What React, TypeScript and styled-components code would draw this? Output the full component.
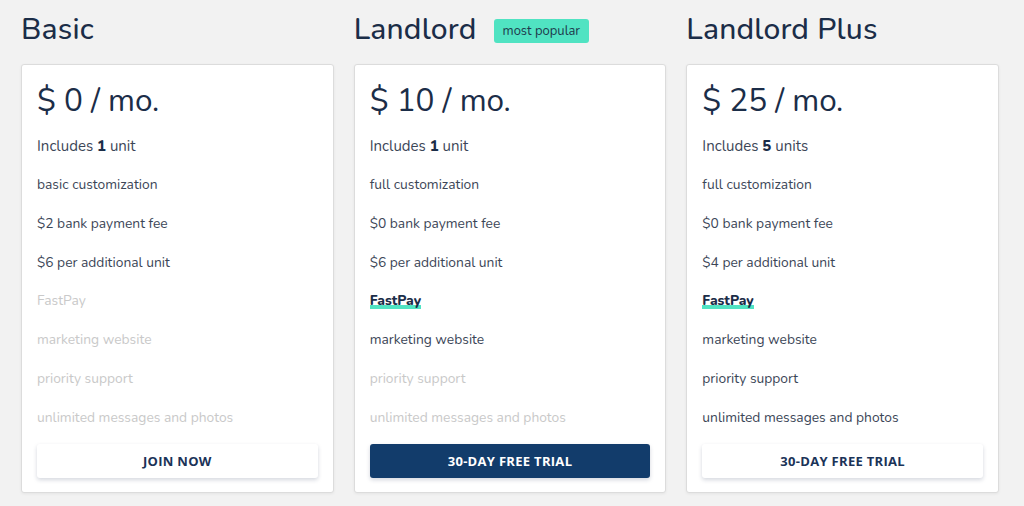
import React from "react";
import styled, { createGlobalStyle } from "styled-components";

const GlobalStyle = createGlobalStyle`
    html, body {
        margin: 0;
        padding: 0;
        background-color: #f2f2f2;
        font-family: "Nunito", "Lato", "Noto Sans", sans-serif;
    }
`;

const Page = styled.main`
    display: grid;
    grid-template-columns: repeat(3, 1fr);
    column-gap: 20px;
    padding: 9px 25px 14px 21px;
    min-height: 506px;
    box-sizing: border-box;
`;

const Column = styled.section`
    display: flex;
    flex-direction: column;
`;

const Header = styled.div`
    display: flex;
    align-items: center;
    gap: 17px;
    height: 41px;
    margin-bottom: 14px;
`;

const Title = styled.h2`
    margin: 0;
    color: #1b2d48;
    font-size: 30px;
    font-weight: 500;
    letter-spacing: 0.2px;
`;

const Badge = styled.span`
    background-color: #50e3c2;
    color: #1f3a4d;
    font-size: 13px;
    padding: 3px 9px 3px;
    border-radius: 3px;
    margin-top: 2px;
`;

const Card = styled.div`
    background-color: #ffffff;
    border: 1px solid #dcdcdc;
    border-radius: 3px;
    box-shadow: 0 1px 3px rgba(0, 0, 0, 0.06);
    padding: 16px 15px 14px 15px;
    display: flex;
    flex-direction: column;
`;

const Price = styled.div`
    color: #1b2d48;
    font-size: 31.5px;
    line-height: 40px;
    margin-bottom: 6px;
`;

const Includes = styled.div`
    color: #3c4657;
    font-size: 15px;
    line-height: 39px;

    b {
        color: #1b2d48;
        font-weight: 800;
    }
`;

const Feature = styled.div<{ $off?: boolean }>`
    color: ${(p) => (p.$off ? "#c9c9c9" : "#3c4657")};
    font-size: 13.8px;
    line-height: 38.8px;
`;

const Highlight = styled.span`
    color: #1b2d48;
    font-weight: 800;
    box-shadow: inset 0 -4px 0 #50e3c2;
    line-height: 16px;
    display: inline-block;
`;

const Button = styled.button<{ $primary?: boolean }>`
    margin-top: 6px;
    height: 34px;
    border: none;
    border-radius: 3px;
    background-color: ${(p) => (p.$primary ? "#123c6b" : "#ffffff")};
    color: ${(p) => (p.$primary ? "#ffffff" : "#1b3358")};
    box-shadow: 0 2px 4px rgba(20, 40, 80, 0.18);
    font-family: "Open Sans", "Noto Sans", sans-serif;
    font-weight: 700;
    font-size: 13px;
    letter-spacing: 0.3px;
    cursor: pointer;
`;

type Plan = {
    name: string;
    badge?: string;
    price: string;
    units: string;
    unitLabel: string;
    features: { text: string; off?: boolean; fastpay?: boolean }[];
    cta: string;
    primary?: boolean;
};

const plans: Plan[] = [
    {
        name: "Basic",
        price: "$ 0 / mo.",
        units: "1",
        unitLabel: "unit",
        features: [
            { text: "basic customization" },
            { text: "$2 bank payment fee" },
            { text: "$6 per additional unit" },
            { text: "FastPay", off: true },
            { text: "marketing website", off: true },
            { text: "priority support", off: true },
            { text: "unlimited messages and photos", off: true },
        ],
        cta: "JOIN NOW",
    },
    {
        name: "Landlord",
        badge: "most popular",
        price: "$ 10 / mo.",
        units: "1",
        unitLabel: "unit",
        features: [
            { text: "full customization" },
            { text: "$0 bank payment fee" },
            { text: "$6 per additional unit" },
            { text: "FastPay", fastpay: true },
            { text: "marketing website" },
            { text: "priority support", off: true },
            { text: "unlimited messages and photos", off: true },
        ],
        cta: "30-DAY FREE TRIAL",
        primary: true,
    },
    {
        name: "Landlord Plus",
        price: "$ 25 / mo.",
        units: "5",
        unitLabel: "units",
        features: [
            { text: "full customization" },
            { text: "$0 bank payment fee" },
            { text: "$4 per additional unit" },
            { text: "FastPay", fastpay: true },
            { text: "marketing website" },
            { text: "priority support" },
            { text: "unlimited messages and photos" },
        ],
        cta: "30-DAY FREE TRIAL",
    },
];

export default function App() {
    return (
        <>
            <GlobalStyle />
            <Page>
                {plans.map((plan) => (
                    <Column key={plan.name}>
                        <Header>
                            <Title>{plan.name}</Title>
                            {plan.badge && <Badge>{plan.badge}</Badge>}
                        </Header>
                        <Card>
                            <Price>{plan.price}</Price>
                            <Includes>
                                Includes <b>{plan.units}</b> {plan.unitLabel}
                            </Includes>
                            {plan.features.map((f) => (
                                <Feature key={f.text} $off={f.off}>
                                    {f.fastpay ? <Highlight>{f.text}</Highlight> : f.text}
                                </Feature>
                            ))}
                            <Button $primary={plan.primary}>{plan.cta}</Button>
                        </Card>
                    </Column>
                ))}
            </Page>
        </>
    );
}
